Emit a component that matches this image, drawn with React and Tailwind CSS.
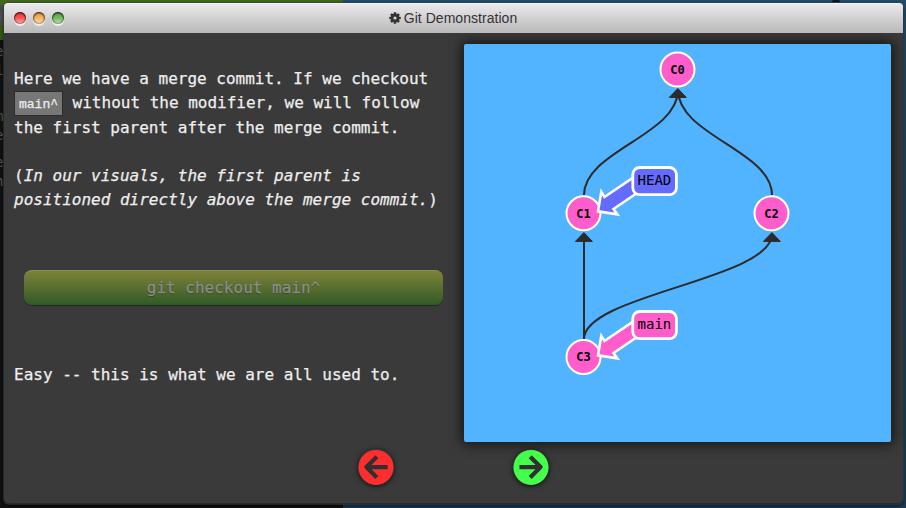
import React from "react";

const INK = "#2b2b2b";
const PINK = "#ff5ccc";
const TEETH = [0, 45, 90, 135];

function Gear() {
  return (
    <svg viewBox="0 0 12 12" className="h-[12px] w-[12px] text-[#333]">
      <g fill="currentColor">
        {TEETH.map((a) => (
          <rect key={a} x="4.7" y="0.3" width="2.6" height="11.4" rx="0.5" transform={`rotate(${a} 6 6)`} />
        ))}
        <circle cx="6" cy="6" r="4.3" />
      </g>
      <circle cx="6" cy="6" r="1.6" fill="#d6d6d6" />
    </svg>
  );
}

function Light({ className }) {
  return (
    <span
      className={`h-[12px] w-[12px] rounded-full shadow-[0_2px_0_rgba(255,255,255,0.75),inset_0_1px_2px_rgba(0,0,0,0.75),inset_0_0_1px_1px_rgba(0,0,0,0.25)] ${className}`}
    />
  );
}

function TitleBar() {
  return (
    <header className="relative flex h-[30px] shrink-0 items-center justify-center rounded-t-[4px] border-t border-[#f4f4f4] bg-linear-to-b from-[#ebe9eb] to-[#b9b9b9] pb-[2px]">
      <div className="absolute left-[10px] top-[8px] flex gap-[7px]">
        <Light className="bg-linear-to-b from-[#e0393c] via-[#ff5052] to-[#ffb0b0]" />
        <Light className="bg-linear-to-b from-[#dc9a4c] via-[#f5b45f] to-[#ffe2b0]" />
        <Light className="bg-linear-to-b from-[#5aa048] via-[#74ba60] to-[#c4ecb4]" />
      </div>
      <div className="flex items-center gap-[3px] pr-[1px] text-[14px] leading-none tracking-[0.04px] text-[#333]">
        <Gear />
        <span>Git Demonstration</span>
      </div>
    </header>
  );
}

function Commit({ x, y, label }) {
  return (
    <g>
      <circle cx={x} cy={y} r="17" fill={PINK} stroke="#fff" strokeWidth="2" />
      <text x={x} y={y + 4.2} textAnchor="middle" fontSize="12" fontWeight="bold" fill="#000">
        {label}
      </text>
    </g>
  );
}

function Branch({ dy, label, fill }) {
  return (
    <g transform={`translate(0 ${dy})`} stroke="#fff" strokeWidth="2.8">
      <path
        d="M636 175.6L604.5 197L601.3 191.8L598 211.3L617.4 214.4L613.5 209L640 191"
        fill={fill}
        strokeWidth="2.6"
      />
      <rect x="632.8" y="167.5" width="43.6" height="27.2" rx="7" fill={fill} />
      <text x="654.4" y="185.3" textAnchor="middle" fontSize="14" fill="#000" stroke="none">
        {label}
      </text>
    </g>
  );
}

function CommitTree() {
  return (
    <svg
      viewBox="464 44 427 398"
      className="h-[398px] w-[427px] rounded-[2px] bg-[#52b3ff] font-['DejaVu_Sans_Mono',monospace] shadow-[0_0_12px_3px_rgba(0,0,0,0.6)]"
    >
      <g fill="none" stroke={INK} strokeWidth="2">
        <path d="M584 195C584 151 678 135 678 90" />
        <path d="M772 195C772 151 678 135 678 90" />
        <path d="M584 339V236" />
        <path d="M584 339C584 295 772 279 772 234" />
      </g>
      <g fill={INK} stroke={INK} strokeWidth="1" strokeLinejoin="round">
        <path d="M677.8 88.6L686.3 97.4H669.3Z" />
        <path d="M583.9 232.6L592.4 241.4H575.4Z" />
        <path d="M771.9 232.6L780.4 241.4H763.4Z" />
      </g>
      <Commit x={677.5} y={69.5} label="C0" />
      <Commit x={583.5} y={213.3} label="C1" />
      <Commit x={771.5} y={213.3} label="C2" />
      <Commit x={583.5} y={357} label="C3" />
      <Branch dy={0} label="HEAD" fill="#666bff" />
      <Branch dy={144} label="main" fill={PINK} />
    </svg>
  );
}

function NavButton({ label, color, flip }) {
  return (
    <button aria-label={label} className="h-[36px] w-[36px] rounded-full shadow-[0_1px_5px_rgba(0,0,0,0.75)]">
      <svg viewBox="0 0 36 36" className="block h-[36px] w-[36px]">
        <circle cx="18" cy="18.4" r="17.5" fill={color} />
        <g transform={flip ? "translate(36 0.2) scale(-1 1)" : "translate(0 0.2)"}>
          <path d="M18.8 7.6L8.4 17.9L18.8 28.2M9 17.9H29.6" fill="none" stroke="#303030" strokeWidth="4.2" strokeLinejoin="round" strokeLinecap="butt" />
        </g>
      </svg>
    </button>
  );
}

function Lesson() {
  return (
    <section className="flex w-[460px] shrink-0 flex-col whitespace-nowrap pl-[10px] pt-[34px] font-['DejaVu_Sans_Mono',monospace] text-[16px] leading-[24.25px] text-[#eee] [-webkit-text-stroke:0.25px_currentColor]">
      <p>
        <span className="block">Here we have a merge commit. If we checkout</span>
        <span className="flex h-[24.25px] items-center">
          <code className="flex h-[25px] w-[49px] shrink-0 items-center justify-center border border-[#2b2b2b] bg-[#777] pt-[2px] font-['Liberation_Mono',monospace] text-[13px] leading-none">
            main^
          </code>
          <span className="ml-[9.6px]">without the modifier, we will follow</span>
        </span>
        <span className="block">the first parent after the merge commit.</span>
      </p>
      <p className="mt-[24.25px]">
        (<em>In our visuals, the first parent is<br />positioned directly above the merge commit.</em>)
      </p>
      <button className="ml-[10px] mt-[57px] h-[35px] w-[419px] shrink-0 rounded-[8px] bg-linear-to-b from-[#7f8339] to-[#2f5a27] pt-[3px] text-[#8c8c8c] shadow-[0_1px_0_#1f2b1d,inset_0_1px_0_rgba(255,255,255,0.12)] [text-shadow:0_1px_1px_rgba(0,0,0,0.4)]">
        git checkout main^
      </button>
      <p className="mt-[58.5px]">Easy -- this is what we are all used to.</p>
    </section>
  );
}

const FRAGMENTS = ["y", "e", "i", "m", "e", "e", "h"];
const FRAGMENT_TOPS = ["top-[5px]", "top-[41px]", "top-[60px]", "top-[106px]", "top-[125px]", "top-[152px]", "top-[171px]"];

export default function App() {
  return (
    <div className="relative h-[508px] w-[906px] overflow-hidden bg-[#111] px-[4px] pt-[3px] font-['Liberation_Sans',Arial,sans-serif]">
      <div className="absolute inset-0 grid grid-cols-[343px_1fr]">
        <div className="flex flex-col">
          <div className="h-[5px] bg-[#426719]" />
          <div className="h-[20px] w-[4px] bg-[#4b4b4b]" />
          <div className="h-[15px] w-[4px] bg-[#37580f]" />
        </div>
        <div className="bg-linear-to-b from-[#1f4c6b] to-[#1a3c55]" />
      </div>
      <div className="absolute left-[832px] top-0 h-[2px] w-[8px] rounded-t bg-[#151515]" />
      <div className="absolute inset-y-0 left-0 w-[3px] overflow-hidden font-['DejaVu_Sans_Mono',monospace] text-[14px] leading-[20px] text-[#555]">
        {FRAGMENTS.map((c, i) => (
          <span key={i} className={`absolute left-[-5px] ${FRAGMENT_TOPS[i]}`}>{c}</span>
        ))}
      </div>
      <main className="relative flex h-[501px] w-[899px] flex-col rounded-[5px] bg-[#3a3a3a] shadow-[0_0_0_1px_rgba(43,60,72,0.6),0_2px_4px_rgba(0,0,0,0.6)]">
        <TitleBar />
        <div className="flex h-[409px] shrink-0">
          <Lesson />
          <div className="pt-[11px]">
            <CommitTree />
          </div>
        </div>
        <nav className="flex flex-1 gap-[118.5px] rounded-b-[5px] border-b border-[#2b2b2b] pl-[354px] pt-[7px]">
          <NavButton label="Previous" color="#ff2e2e" />
          <NavButton label="Next" color="#43ff4b" flip />
        </nav>
      </main>
    </div>
  );
}
